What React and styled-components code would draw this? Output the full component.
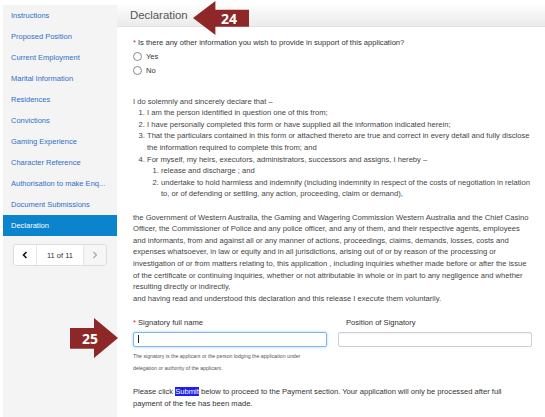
import React from 'react';
import styled, { createGlobalStyle } from 'styled-components';

const GlobalStyle = createGlobalStyle`
  html, body {
    margin: 0;
    padding: 0;
    background: #fff;
  }
  body {
    font-family: "Liberation Sans", Arial, sans-serif;
    width: 545px;
    height: 417px;
    overflow: hidden;
  }
`

const Page = styled.div`
  position: relative;
  display: flex;
  align-items: stretch;
  padding: 5px 0 0 3px;
  height: 417px;
  box-sizing: border-box;
`

const Sidebar = styled.nav`
  width: 114px;
  flex: none;
  background: #f4f4f4;
`

const NavItem = styled.div`
  height: 21px;
  line-height: 21px;
  padding-left: 8px;
  font-size: 7.5px;
  white-space: nowrap;
  color: ${props => props.$active ? '#fff' : '#2f6fc8'};
  background: ${props => props.$active ? '#0a84cc' : 'transparent'};
`

const Pager = styled.div`
  display: flex;
  margin: 8px 0 0 10px;
  width: 94px;
  height: 22px;
  box-sizing: border-box;
  border: 1px solid #dcdcdc;
  border-radius: 3px;
  background: #fff;
  overflow: hidden;
`

const PagerButton = styled.div`
  width: 22px;
  display: flex;
  align-items: center;
  justify-content: center;
  background: ${props => props.$disabled ? '#f6f6f6' : '#fff'};
`

const PagerLabel = styled.div`
  flex: 1;
  display: flex;
  align-items: center;
  justify-content: center;
  font-size: 7.5px;
  color: #333;
  border-left: 1px solid #e6e6e6;
  border-right: 1px solid #e6e6e6;
`

const Main = styled.main`
  flex: 1;
  min-width: 0;
`

const Header = styled.div`
  height: 21px;
  line-height: 21px;
  padding-left: 13px;
  font-size: 11.4px;
  color: #555;
  background: linear-gradient(#fdfdfd, #ebebeb);
  border-bottom: 1px solid #e2e2e2;
`

const Body = styled.div`
  padding: 10px 8px 0 16px;
  font-size: 7.6px;
  line-height: 11.6px;
  color: #444;
`

const Question = styled.div`
  color: #333;
  margin-bottom: 1px;
`

const Req = styled.span`
  color: #e02020;
  margin-right: 2px;
`

const RadioRow = styled.label`
  display: flex;
  align-items: center;
  gap: 4px;
  height: 14px;
  color: #333;
`

const RadioCircle = styled.span`
  width: 7px;
  height: 7px;
  border: 1px solid #888;
  border-radius: 50%;
  background: #fff;
`

const Declaration = styled.div`
  margin-top: 18px;
  max-width: 398px;

  p {
    margin: 0;
  }

  ol {
    margin: 0 0 11.6px;
    padding-left: 14px;
  }

  ol ol {
    margin: 0;
    padding-left: 14px;
  }
`

const SignRow = styled.div`
  display: grid;
  grid-template-columns: 194px 194px;
  column-gap: 11px;
  margin-top: 13px;
`

const Label = styled.div`
  color: #333;
  margin-bottom: 3px;
  padding-left: ${props => props.$indent ? '8px' : '0'};
`

const Input = styled.div`
  height: 15px;
  box-sizing: border-box;
  border: 1px solid ${props => props.$focused ? '#7fb6e6' : '#d0d0d0'};
  border-radius: 2px;
  box-shadow: ${props => props.$focused ? '0 0 3px rgba(102,175,233,.6)' : 'inset 0 1px 1px rgba(0,0,0,.05)'};
  display: flex;
  align-items: center;
  padding-left: 4px;
`

const Caret = styled.span`
  width: 1px;
  height: 8px;
  background: #222;
`

const Help = styled.div`
  margin-top: 3px;
  max-width: 184px;
  font-size: 5.2px;
  line-height: 12px;
  color: #555;
`

const Notice = styled.p`
  margin: 12px 0 0;
  max-width: 385px;
  color: #333;
  line-height: 12px;
`

const Highlight = styled.span`
  background: #1f1ff0;
  color: #fff;
`

const Callout = styled.div`
  position: absolute;
  left: ${props => props.$x}px;
  top: ${props => props.$y}px;
  width: ${props => props.$w}px;
  height: ${props => props.$h}px;
  background: #8e2828;
  clip-path: ${props => props.$dir === 'left'
    ? 'polygon(0 50%, 40% 0, 40% 26%, 100% 26%, 100% 76%, 40% 76%, 40% 100%)'
    : 'polygon(0 25%, 50% 25%, 50% 0, 100% 50%, 50% 100%, 50% 77%, 0 77%)'};
  display: flex;
  align-items: center;
  justify-content: center;
  padding: ${props => props.$dir === 'left' ? '1px 0 0 16px' : '1px 8px 0 0'};
  box-sizing: border-box;
  color: #fff;
  font-family: "Open Sans", "Liberation Sans", sans-serif;
  font-weight: 700;
  font-size: 14px;
`

const Chevron = ({ color }) => (
  <svg width="6" height="8" viewBox="0 0 6 8">
    <path d="M4.5 1 L1.5 4 L4.5 7" fill="none" stroke={color} strokeWidth="1.6" />
  </svg>
)

const ChevronRight = ({ color }) => (
  <svg width="6" height="8" viewBox="0 0 6 8">
    <path d="M1.5 1 L4.5 4 L1.5 7" fill="none" stroke={color} strokeWidth="1.2" />
  </svg>
)

const navItems = [
  'Instructions',
  'Proposed Position',
  'Current Employment',
  'Marital Information',
  'Residences',
  'Convictions',
  'Gaming Experience',
  'Character Reference',
  'Authorisation to make Enq...',
  'Document Submissions',
  'Declaration',
]

export default function App() {
  return (
    <>
      <GlobalStyle />
      <Page>
        <Sidebar>
          {navItems.map(item => (
            <NavItem key={item} $active={item === 'Declaration'}>{item}</NavItem>
          ))}
          <Pager>
            <PagerButton><Chevron color="#111" /></PagerButton>
            <PagerLabel>11 of 11</PagerLabel>
            <PagerButton $disabled><ChevronRight color="#aaa" /></PagerButton>
          </Pager>
        </Sidebar>
        <Main>
          <Header>Declaration</Header>
          <Body>
            <Question><Req>*</Req>Is there any other information you wish to provide in support of this application?</Question>
            <RadioRow><RadioCircle />Yes</RadioRow>
            <RadioRow><RadioCircle />No</RadioRow>

            <Declaration>
              <p>I do solemnly and sincerely declare that –</p>
              <ol>
                <li>I am the person identified in question one of this from;</li>
                <li>I have personally completed this form or have supplied all the information indicated herein;</li>
                <li>That the particulars contained in this form or attached thereto are true and correct in every detail and fully disclose the information required to complete this from; and</li>
                <li>
                  For myself, my heirs, executors, administrators, successors and assigns, I hereby –
                  <ol>
                    <li>release and discharge ; and</li>
                    <li>undertake to hold harmless and indemnify (including indemnity in respect of the costs of negotiation in relation to, or of defending or settling, any action, proceeding, claim or demand),</li>
                  </ol>
                </li>
              </ol>
              <p>
                the Government of Western Australia, the Gaming and Wagering Commission Western Australia and the Chief Casino Officer, the Commissioner of Police and any police officer, and any of them, and their respective agents, employees and informants, from and against all or any manner of actions, proceedings, claims, demands, losses, costs and expenses whatsoever, in law or equity and in all jurisdictions, arising out of or by reason of the processing or investigation of or from matters relating to, this application , including inquiries whether made before or after the issue of the certificate or continuing inquiries, whether or not attributable in whole or in part to any negligence and whether resulting directly or indirectly,
              </p>
              <p>and having read and understood this declaration and this release I execute them voluntarily.</p>
            </Declaration>

            <SignRow>
              <div>
                <Label><Req>*</Req>Signatory full name</Label>
                <Input $focused><Caret /></Input>
                <Help>The signatory is the applicant or the person lodging the application under delegation or authority of the applicant.</Help>
              </div>
              <div>
                <Label $indent>Position of Signatory</Label>
                <Input />
              </div>
            </SignRow>

            <Notice>
              Please click <Highlight>Submit</Highlight> below to proceed to the Payment section. Your application will only be processed after full payment of the fee has been made.
            </Notice>
          </Body>
        </Main>

        <Callout $dir="left" $x={193} $y={1} $w={56} $h={34}>24</Callout>
        <Callout $dir="right" $x={70} $y={318} $w={48} $h={40}>25</Callout>
      </Page>
    </>
  )
}
